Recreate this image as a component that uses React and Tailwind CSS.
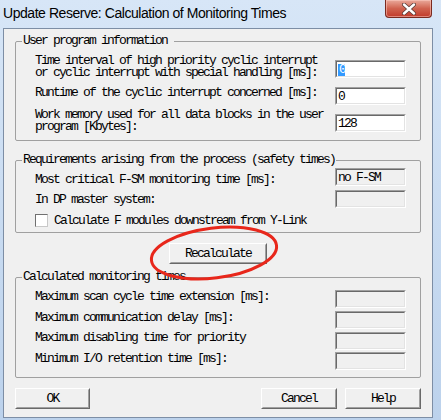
const mono = "font-['Liberation_Mono',monospace] text-[13px] tracking-[-1.8px] leading-[12px] text-black"

function Field({ value = '', disabled = false, selected = false }) {
  return (
    <div className="w-[71px] h-[18px] shrink-0 border border-t-[#a0a0a0] border-l-[#a0a0a0] border-b-white border-r-white">
      <div
        className={`h-full border border-t-[#696969] border-l-[#696969] border-b-[#e3e3e3] border-r-[#e3e3e3] pl-[1px] pt-[2px] ${
          disabled ? 'bg-[#f0f0f0]' : 'bg-white'
        }`}
      >
        {selected ? (
          <span className="bg-[#3399ff] text-white inline-block h-[12px] pl-[1px]">{value}</span>
        ) : (
          <span>{value}</span>
        )}
      </div>
    </div>
  )
}

function Button({ label, className = '' }) {
  return (
    <div
      className={`h-[21px] border border-t-white border-l-white border-b-[#696969] border-r-[#696969] bg-[#f0f0f0] ${className}`}
    >
      <div className="h-full border border-t-[#f0f0f0] border-l-[#f0f0f0] border-b-[#a0a0a0] border-r-[#a0a0a0] flex items-center justify-center">
        {label}
      </div>
    </div>
  )
}

function Group({ title, className = '', children }) {
  return (
    <fieldset className={`mx-[11px] border border-[#a0a0a0] rounded-[2px] pl-[6px] pr-[5px] ${className}`}>
      <legend className="px-[1px] leading-[12px] whitespace-pre">{title}</legend>
      <div className="pl-[13px] pr-[9px]">{children}</div>
    </fieldset>
  )
}

function Row({ label, className = '', labelTop = '', fieldTop = '', field }) {
  return (
    <div className={`flex items-start justify-between ${className}`}>
      <div className={`whitespace-pre ${labelTop}`}>{label}</div>
      <div className={fieldTop}>{field}</div>
    </div>
  )
}

function CloseButton() {
  return (
    <div className="w-[47px] h-[18px] mr-[9px] rounded-b-[4px] border border-t-0 border-[#7a2a20] bg-gradient-to-b from-[#e9a99b] via-[#d0624f] to-[#c1392a] flex items-center justify-center shadow-[inset_0_0_0_1px_rgba(255,210,200,0.5)]">
      <svg width="14" height="12" viewBox="0 0 14 12">
        <path d="M2 1.5 L12 10.5 M12 1.5 L2 10.5" stroke="#5a3b36" strokeWidth="4" strokeLinecap="round" />
        <path d="M2 1.5 L12 10.5 M12 1.5 L2 10.5" stroke="#ffffff" strokeWidth="2.4" strokeLinecap="round" />
      </svg>
    </div>
  )
}

export default function App() {
  return (
    <div className="w-[441px] h-[420px] bg-gradient-to-b from-[#d7e6f7] to-[#bcd2ec] flex flex-col overflow-hidden">
      <div className="h-[28px] flex items-start justify-between shrink-0">
        <div className="pl-[3px] pt-[3px] font-['Liberation_Sans',sans-serif] text-[14px] tracking-[-0.45px] text-black">
          Update Reserve: Calculation of Monitoring Times
        </div>
        <CloseButton />
      </div>

      <div className={`relative ml-[3px] mr-[8px] h-[390px] bg-[#f0f0f0] border border-[#7d8ea5] flex flex-col ${mono}`}>
        <Group title="User program information " className="mt-[6px] pb-[7px]">
          <Row
            className="pt-[8px]"
            label={'Time interval of high priority cyclic interrupt\nor cyclic interrupt with special handling [ms]:'}
            fieldTop="mt-[5px]"
            field={<Field value="0" selected />}
          />
          <Row
            className="mt-[8px]"
            label="Runtime of the cyclic interrupt concerned [ms]:"
            field={<Field value="0" />}
          />
          <Row
            className="mt-[4px]"
            label={'Work memory used for all data blocks in the user\nprogram [Kbytes]:'}
            fieldTop="mt-[5px]"
            field={<Field value="128" />}
          />
        </Group>

        <Group title="Requirements arising from the process (safety times)" className="mt-[13px] pb-[5px]">
          <Row
            className="pt-[2px]"
            label="Most critical F-SM monitoring time [ms]:"
            labelTop="mt-[6px]"
            field={<Field value="no F-SM" disabled />}
          />
          <Row
            className="mt-[4px]"
            label="In DP master system:"
            labelTop="mt-[4px]"
            field={<Field disabled />}
          />
          <div className="mt-[6px] flex items-center gap-[6px] h-[13px]">
            <div className="w-[13px] h-[13px] border border-t-[#707070] border-l-[#707070] border-b-[#c8c8c8] border-r-[#c8c8c8] bg-white" />
            <span className="whitespace-pre">Calculate F modules downstream from Y-Link</span>
          </div>
        </Group>

        <div className="mt-[10px] flex justify-center">
          <Button label="Recalculate" className="w-[98px] h-[20px]" />
        </div>

        <Group title="Calculated monitoring times" className="mt-[7px] pb-[7px]">
          <Row
            className="pt-[7px]"
            label="Maximum scan cycle time extension [ms]:"
            labelTop="mt-[1px]"
            field={<Field disabled />}
          />
          <Row
            className="mt-[3px]"
            label="Maximum communication delay [ms]:"
            labelTop="mt-[1px]"
            field={<Field disabled />}
          />
          <Row className="mt-[3px]" label="Maximum disabling time for priority" field={<Field disabled />} />
          <Row
            className="mt-[2px]"
            label="Minimum I/O retention time [ms]:"
            labelTop="mt-[1px]"
            field={<Field disabled />}
          />
        </Group>

        <div className="mt-[10px] mx-[11px] flex items-center">
          <Button label="OK" className="w-[75px]" />
          <div className="flex-1" />
          <Button label="Cancel" className="w-[76px]" />
          <Button label="Help" className="w-[76px] ml-[8px]" />
        </div>

        <svg
          className="absolute left-[138px] top-[192px] pointer-events-none"
          width="144"
          height="64"
          viewBox="0 0 144 64"
        >
          <ellipse
            cx="72"
            cy="32"
            rx="63"
            ry="25"
            transform="rotate(-7 72 32)"
            fill="none"
            stroke="#e8271b"
            strokeWidth="3"
          />
        </svg>
      </div>
    </div>
  )
}
